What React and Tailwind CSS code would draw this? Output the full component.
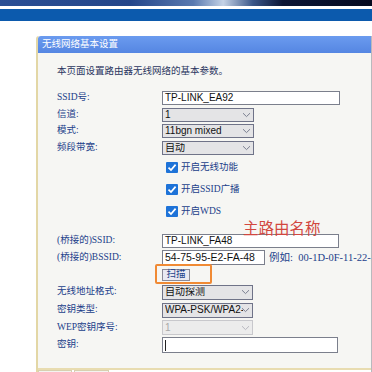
import React from "react";

const CJK = { fontFamily: '"Liberation Serif","Noto Sans CJK SC",serif' };
const SANS = { fontFamily: '"Liberation Sans","Noto Sans CJK SC",sans-serif' };

function Chevron({ light }) {
  return (
    <svg width="9" height="6" viewBox="0 0 9 6" className="absolute right-[2px] top-1/2 -translate-y-1/2">
      <path d="M1 1.2 L4.5 4.6 L8 1.2" fill="none" stroke={light ? "#b8b8c0" : "#7a7f90"} strokeWidth="1" />
    </svg>
  );
}

function Select({ value, disabled, w = "w-[92px]", h = "h-[14px]" }) {
  return (
    <div
      className={`relative ${w} ${h} border ${disabled ? "border-[#c8c8cc] bg-[#ececec] text-[#a8a8a8]" : "border-[#6f7388] bg-[#e4e4e6] text-[#111]"} text-[10px] leading-none flex items-center pl-[2px] overflow-hidden`}
      style={SANS}
    >
      <span className="whitespace-nowrap overflow-hidden w-[78px]">{value}</span>
      <Chevron light={disabled} />
    </div>
  );
}

function Input({ value, w = "w-[177px]", h = "h-[14px]", cursor, size = "text-[10px]" }) {
  return (
    <div
      className={`${w} ${h} border border-[#7b7f8c] bg-white ${size} leading-none flex items-center pl-[2px] text-[#111] whitespace-nowrap`}
      style={SANS}
    >
      {cursor ? <span className="w-px h-[11px] bg-[#222]" /> : value}
    </div>
  );
}

function Check({ label }) {
  return (
    <div className="flex items-center pl-[4px]">
      <div className="w-[12px] h-[11px] rounded-[1px] bg-[#1e73d8] flex items-center justify-center">
        <svg width="10" height="9" viewBox="0 0 10 9">
          <path d="M1.5 4.6 L4 7 L8.6 1.6" fill="none" stroke="#fff" strokeWidth="1.7" />
        </svg>
      </div>
      <span className="ml-[3px] text-[9.5px] text-[#22408a]" style={CJK}>{label}</span>
    </div>
  );
}

function Row({ label, h, children }) {
  return (
    <div className={`flex items-center ${h}`}>
      <div className="w-[105px] shrink-0 text-[9.5px] text-[#22408a] leading-none" style={CJK}>{label}</div>
      <div className="flex items-center">{children}</div>
    </div>
  );
}

export default function App() {
  return (
    <div className="w-[372px] h-[372px] overflow-hidden bg-white relative">
      <div className="h-[6px] bg-[linear-gradient(90deg,#2b4f95_0%,#24468a_35%,#5a7ab0_52%,#c4d2e6_60%,#3a5688_68%,#0c1636_76%,#050a20_100%)]" />
      <div className="h-[3px] bg-white" />
      <div className="h-[12px] bg-[#0c5aad]" />
      <div className="h-[15px] bg-white" />
      <div className="ml-[36px] h-[340px] flex flex-col border-l-2 border-l-[#e3d7a6] border-r border-r-[#b9b9bd] rounded-tl-[3px]">
        <div className="h-[17px] bg-[linear-gradient(180deg,#6b9bef,#5586e2)] flex items-center pl-[4px] text-white text-[9.5px] rounded-tl-[3px]" style={CJK}>
          无线网络基本设置
        </div>
        <div className="flex-1 bg-[#f6f6f3] pl-[19px] relative border-b-2 border-b-[#e8dcb0] overflow-hidden">
          <div className="mt-[9px] h-[18px] flex items-center text-[9.5px] text-[#2a3560]" style={CJK}>
            本页面设置路由器无线网络的基本参数。
          </div>
          <div className="h-[10px]" />
          <Row label="SSID号:" h="h-[16px]"><Input value="TP-LINK_EA92" w="w-[178px]" h="h-[14px]" /></Row>
          <Row label="信道:" h="h-[17px]"><Select value="1" /></Row>
          <Row label="模式:" h="h-[16px]"><Select value="11bgn mixed" /></Row>
          <Row label="频段带宽:" h="h-[18px]"><Select value="自动" /></Row>
          <Row label="" h="h-[21px]"><Check label="开启无线功能" /></Row>
          <Row label="" h="h-[22px]"><Check label="开启SSID广播" /></Row>
          <Row label="" h="h-[22px]"><Check label="开启WDS" /></Row>
          <div className="h-[10px] relative">
            <div className="absolute left-[186px] top-[-2px] text-[15.5px] leading-none text-[#d2473f] whitespace-nowrap" style={{ fontFamily: '"Noto Sans CJK SC",sans-serif' }}>
              主路由名称
            </div>
          </div>
          <Row label="(桥接的)SSID:" h="h-[17px]"><Input value="TP-LINK_FA48" w="w-[177px]" h="h-[14px]" /></Row>
          <Row label="(桥接的)BSSID:" h="h-[17px]">
            <Input value="54-75-95-E2-FA-48" w="w-[103px]" h="h-[15px]" size="text-[10.5px]" />
            <span className="ml-[4px] text-[10.5px] text-[#22408a] whitespace-nowrap" style={CJK}>例如:&nbsp;&nbsp;00-1D-0F-11-22-33</span>
          </Row>
          <Row label="" h="h-[17px]">
            <div className="relative">
              <div className="w-[28px] h-[12px] border border-[#8a8a98] bg-[#e9e9f2] text-[9.5px] text-[#22408a] flex items-center justify-center leading-none" style={CJK}>扫描</div>
              <div className="absolute left-[-7px] top-[-5px] w-[57px] h-[20px] border-2 border-[#f08a34] rounded-[2px]" />
            </div>
          </Row>
          <Row label="无线地址格式:" h="h-[18px]"><Select value="自动探测" w="w-[91px]" h="h-[15px]" /></Row>
          <Row label="密钥类型:" h="h-[18px]"><Select value="WPA-PSK/WPA2-PSK" w="w-[91px]" h="h-[15px]" /></Row>
          <Row label="WEP密钥序号:" h="h-[17px]"><Select value="1" disabled w="w-[91px]" h="h-[15px]" /></Row>
          <Row label="密钥:" h="h-[18px]"><Input cursor w="w-[176px]" h="h-[16px]" /></Row>
        </div>
        <div className="h-[6px] flex gap-[2px] bg-white">
          <div className="w-[34px] border-t border-x border-[#d8d0b0] bg-[#f4f4f0]" />
          <div className="w-[35px] border-t border-x border-[#d8d0b0] bg-[#f4f4f0]" />
        </div>
      </div>
    </div>
  );
}
